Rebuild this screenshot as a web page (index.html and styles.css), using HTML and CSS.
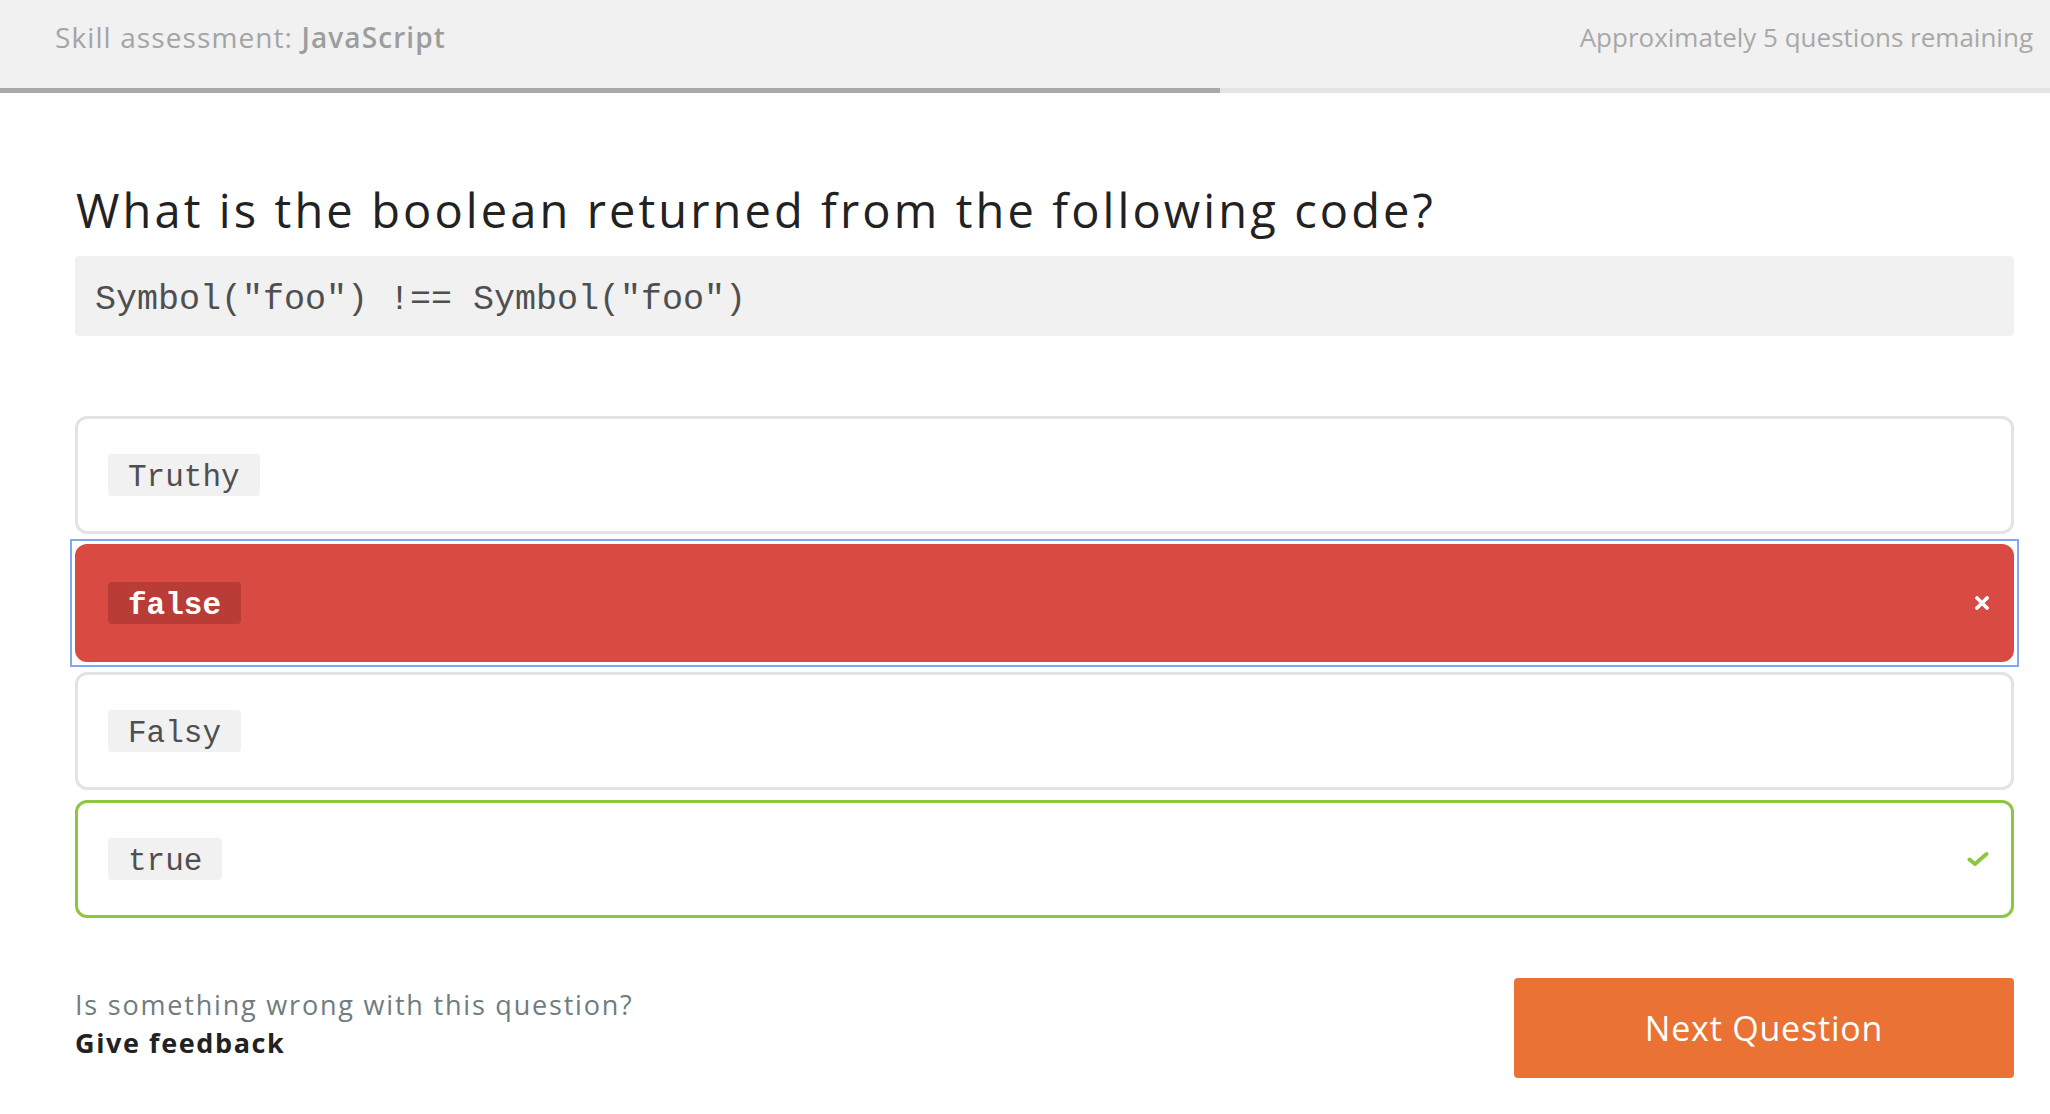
FILE: index.html
```html
<!DOCTYPE html>
<html lang="en">
<head>
<meta charset="utf-8">
<title>Skill assessment: JavaScript</title>
<link rel="stylesheet" href="styles.css">
</head>
<body>
<header class="topbar">
  <div class="topbar-title">Skill assessment: <strong>JavaScript</strong></div>
  <div class="topbar-remaining">Approximately 5 questions remaining</div>
</header>
<div class="progress"><div class="progress-fill" style="width:59.5%"></div></div>
<main class="quiz">
  <h1 class="question">What is the boolean returned from the following code?</h1>
  <pre class="code-block">Symbol("foo") !== Symbol("foo")</pre>
  <ul class="options">
    <li class="option"><code class="chip">Truthy</code></li>
    <li class="option option-wrong"><code class="chip">false</code>
      <svg class="option-icon" width="14" height="14" viewBox="0 0 14 14"><path d="M2 2 L12 12 M12 2 L2 12" stroke="#fff" stroke-width="3.6" stroke-linecap="square" fill="none"/></svg>
    </li>
    <li class="option"><code class="chip">Falsy</code></li>
    <li class="option option-right"><code class="chip">true</code>
      <svg class="option-icon" width="22" height="16" viewBox="0 0 22 16"><path d="M2.5 8.5 L8 13 L19.5 3" stroke="#8dc63f" stroke-width="4" stroke-linejoin="round" stroke-linecap="round" fill="none"/></svg>
    </li>
  </ul>
  <footer class="quiz-footer">
    <div class="feedback">
      <div class="feedback-q">Is something wrong with this question?</div>
      <a class="feedback-link" href="#">Give feedback</a>
    </div>
    <button class="next-btn" type="button">Next Question</button>
  </footer>
</main>
</body>
</html>
```
FILE: styles.css
```css
* { box-sizing: border-box; }
html, body { margin: 0; padding: 0; background: #fff; }
body { font-family: "Open Sans", "Lato", sans-serif; color: #222; }

.topbar {
  height: 88px;
  background: #f1f1f1;
  display: flex;
  justify-content: space-between;
  align-items: flex-start;
  padding: 19px 17px 0 55px;
  font-size: 26px;
  line-height: 36px;
  color: #a4a4a4;
}
.topbar-title { font-size: 28px; letter-spacing: 1.1px; }
.topbar-title strong { font-weight: 600; color: #9d9d9d; }
.topbar-remaining { color: #a8a8a8; }

.progress { height: 5px; background: #e5e5e5; }
.progress-fill { height: 100%; background: #a9a9a9; }

.quiz {
  width: 1939px;
  margin-left: 75px;
  padding-top: 89px;
}
.question {
  margin: 0 0 18px 1px;
  font-size: 47px;
  font-weight: 400;
  line-height: 56px;
  letter-spacing: 3.1px;
  color: #222;
}
.code-block {
  margin: 0 0 80px;
  height: 80px;
  padding: 8px 20px 0;
  background: #f1f1f1;
  border-radius: 4px;
  font-family: "Liberation Mono", monospace;
  font-size: 35px;
  line-height: 72px;
  color: #4f4f4f;
}
.options { list-style: none; margin: 0; padding: 0; }
.option {
  position: relative;
  height: 118px;
  margin-bottom: 10px;
  border: 3px solid #e3e3e3;
  border-radius: 12px;
  padding: 0 22px 0 30px;
  display: flex;
  align-items: center;
}
.chip {
  height: 42px;
  line-height: 36px;
  padding: 6px 20px 0;
  background: #f1f1f1;
  border-radius: 4px;
  font-family: "Liberation Mono", monospace;
  font-size: 31px;
  color: #4f4f4f;
}
.option-icon { margin-left: auto; display: block; }
.option-wrong {
  background: #d94a43;
  border-color: #d94a43;
}
.option-wrong::after {
  content: "";
  position: absolute;
  top: -8px;
  left: -8px;
  right: -8px;
  bottom: -8px;
  border: 2px solid #80a8f0;
  pointer-events: none;
}
.option-wrong .chip { background: #b93c37; color: #fff; font-weight: 700; }
.option-right { border-color: #8dc63f; }

.quiz-footer {
  margin-top: 60px;
  display: flex;
  justify-content: space-between;
  align-items: flex-start;
}
.feedback { padding-top: 8px; font-size: 27px; line-height: 38px; }
.feedback-q { color: #6f7c80; letter-spacing: 1.8px; }
.feedback-link { color: #222; font-weight: 700; text-decoration: none; letter-spacing: 1.6px; }
.next-btn {
  width: 500px;
  height: 100px;
  border: none;
  border-radius: 4px;
  background: #e97234;
  color: #fff;
  font-family: inherit;
  font-size: 34px;
  letter-spacing: 0.8px;
  cursor: pointer;
}
```
